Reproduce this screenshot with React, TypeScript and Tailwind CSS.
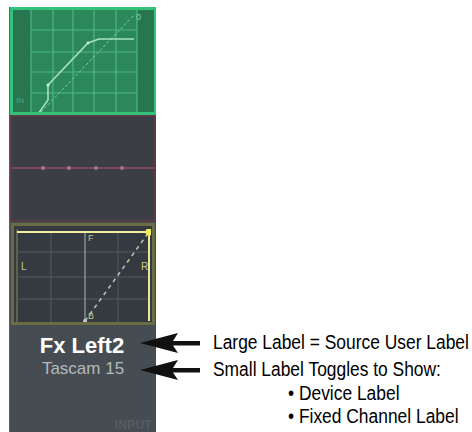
import React from 'react';

// ── 입력 채널 스트립 패널들 ───────────────────────────────────────────────────

function CurvePanel() {
  return (
    <div className="h-[108px] border-[3px] border-[#34c27b] bg-[#2c875b]">
      <svg width="141" height="102" viewBox="0 0 141 102" className="block">
        <rect x="0" y="0" width="18" height="102" fill="#287650" />
        <rect x="124" y="0" width="17" height="102" fill="#287650" />
        {[18, 40, 60, 81, 103, 124].map((x) => (
          <line key={x} x1={x} y1="0" x2={x} y2="102" stroke="#4cb882" strokeWidth="1.2" />
        ))}
        {[20, 42, 62, 83].map((y) => (
          <line key={y} x1="18" y1={y} x2="124" y2={y} stroke="#4cb882" strokeWidth="1.2" />
        ))}
        <line x1="28" y1="102" x2="122" y2="4" stroke="#7fd0a4" strokeWidth="1" strokeDasharray="3 2" />
        <polyline
          points="25,104 35,90 35,75 75,33 86,29 121,29"
          fill="none"
          stroke="#a6e3c0"
          strokeWidth="1.6"
        />
        <circle cx="35" cy="75" r="1.6" fill="#c8f0d8" />
        <circle cx="75" cy="33" r="1.4" fill="#c8f0d8" />
        <text x="123" y="10" fontSize="9" fill="#7fd0a4" fontFamily="Liberation Sans">0</text>
        <text x="3" y="93" fontSize="8" fill="#4aa878" fontFamily="Liberation Sans">IN</text>
      </svg>
    </div>
  );
}

function DynPanel() {
  return (
    <div className="h-[107px] border-2 border-[#5a3b45] bg-[#3b3e44]">
      <svg width="143" height="103" viewBox="0 0 143 103" className="block">
        <line x1="0" y1="51" x2="143" y2="51" stroke="#8c4d5e" strokeWidth="1.5" />
        {[31, 57, 84, 110].map((x) => (
          <circle key={x} cx={x} cy="51" r="2" fill="#a57585" />
        ))}
      </svg>
    </div>
  );
}

function PanPanel() {
  return (
    <div className="mx-[1px] mt-[1px] h-[102px] border-[3px] border-[#696d44] bg-[#353940] px-[2px] pt-[3px]">
      <svg width="135" height="93" viewBox="0 0 135 93" className="block">
        <line x1="1" y1="0" x2="1" y2="93" stroke="#7a7e58" strokeWidth="1.2" />
        {[35, 102].map((x) => (
          <line key={x} x1={x} y1="3" x2={x} y2="93" stroke="#555a5e" strokeWidth="1" />
        ))}
        {[23, 48, 70].map((y) => (
          <line key={y} x1="1" y1={y} x2="133" y2={y} stroke="#555a5e" strokeWidth="1" />
        ))}
        <line x1="69" y1="3" x2="69" y2="93" stroke="#9da0a3" strokeWidth="1.2" />
        <line x1="69" y1="92" x2="133" y2="3" stroke="#b9bca6" strokeWidth="1.6" strokeDasharray="4 4" />
        <line x1="1" y1="3" x2="133" y2="3" stroke="#f1f0a0" strokeWidth="2" />
        <line x1="133" y1="3" x2="133" y2="92" stroke="#e8e79a" strokeWidth="2" />
        <circle cx="133" cy="3" r="3.6" fill="#f4ec5a" />
        <circle cx="69" cy="92" r="2" fill="#c8c8c8" />
        <text x="72" y="12" fontSize="9" fill="#c9c98e" fontFamily="Liberation Sans">F</text>
        <text x="5" y="41" fontSize="10" fill="#c9c98e" fontFamily="Liberation Sans">L</text>
        <text x="125" y="41" fontSize="10" fill="#c9c98e" fontFamily="Liberation Sans">R</text>
        <text x="72" y="90" fontSize="9" fill="#c9c98e" fontFamily="Liberation Sans">B</text>
      </svg>
    </div>
  );
}

// ── 설명 화살표 ──────────────────────────────────────────────────────────────

function Arrow() {
  return (
    <svg width="60" height="22" viewBox="0 0 60 22" className="block flex-shrink-0">
      <path d="M0 11 L38 1 L33 9 L60 9 L60 13.5 L33 13.5 L38 21 Z" fill="#111" />
    </svg>
  );
}

function Note({ children }: { children: React.ReactNode }) {
  // Arial Narrow 느낌: 가로 압축
  return <span className="inline-block whitespace-nowrap origin-left scale-x-[0.87]">{children}</span>;
}

export default function App() {
  return (
    <div className="w-[472px] h-[432px] bg-white flex overflow-hidden font-['Liberation_Sans',Arial,sans-serif]">
      {/* 채널 스트립 */}
      <div className="ml-[9px] mt-[7px] w-[147px] flex-shrink-0 flex flex-col bg-[#464d52] border-l border-[#5a6166]">
        <CurvePanel />
        <DynPanel />
        <PanPanel />
        <div className="flex-1 flex flex-col items-center pt-[8px]">
          <p className="text-[22px] leading-[26px] font-bold text-white pr-[2px]">Fx Left2</p>
          <p className="text-[17px] leading-[20px] text-[#b4b9bc]">Tascam 15</p>
          <p className="mt-auto self-end pr-[4px] text-[12px] leading-[14px] font-bold text-[#555c61] tracking-wide">INPUT</p>
        </div>
      </div>

      {/* 설명 */}
      <div className="-ml-[16px] pt-[331px] flex flex-col text-black text-[20px] leading-[23px]">
        <div className="flex items-center gap-[13px] h-[23px]">
          <Arrow />
          <Note>Large Label = Source User Label</Note>
        </div>
        <div className="flex items-center gap-[13px] h-[23px] mt-[4px]">
          <Arrow />
          <Note>Small Label Toggles to Show:</Note>
        </div>
        <div className="pl-[148px] mt-[1px]">
          <Note>• Device Label</Note>
        </div>
        <div className="pl-[148px]">
          <Note>• Fixed Channel Label</Note>
        </div>
      </div>
    </div>
  );
}
